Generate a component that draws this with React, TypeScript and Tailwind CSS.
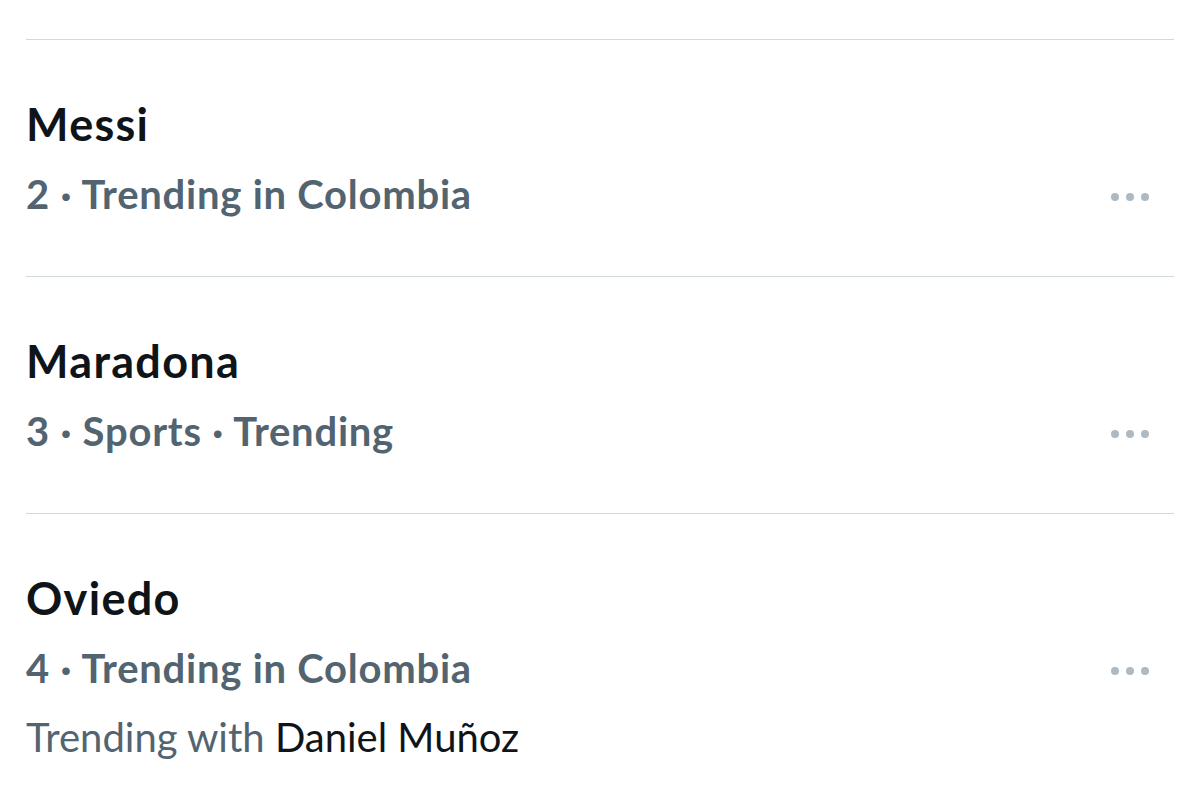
const trends = [
  { title: 'Messi', meta: '2 · Trending in Colombia' },
  { title: 'Maradona', meta: '3 · Sports · Trending' },
  { title: 'Oviedo', meta: '4 · Trending in Colombia', with: 'Daniel Muñoz' },
];

function MoreDots() {
  return (
    <div className="flex items-center gap-[7px]">
      <span className="block h-[8px] w-[8px] rounded-full bg-[#aeb9c2]" />
      <span className="block h-[8px] w-[8px] rounded-full bg-[#aeb9c2]" />
      <span className="block h-[8px] w-[8px] rounded-full bg-[#aeb9c2]" />
    </div>
  );
}

export default function App() {
  return (
    <div className="min-h-[807px] w-[1200px] bg-white px-[26px] pt-[39px] font-['Lato','Noto_Sans',sans-serif]">
      {trends.map((t) => (
        <div key={t.title} className="border-t border-[#cfd9de] pt-[49px] pb-[47px]">
          <div className="text-[45px] font-bold leading-[70px] tracking-[1.3px] text-[#0f1419]">{t.title}</div>
          <div className="flex items-center justify-between">
            <div className="text-[40px] font-bold leading-[70px] tracking-[0.75px] text-[#536471]">{t.meta}</div>
            <div className="pr-[25px] pt-[6px]">
              <MoreDots />
            </div>
          </div>
          {t.with && (
            <div className="text-[40px] leading-[68px] text-[#536471]">
              Trending with <span className="text-[#0f1419]">{t.with}</span>
            </div>
          )}
        </div>
      ))}
    </div>
  );
}
